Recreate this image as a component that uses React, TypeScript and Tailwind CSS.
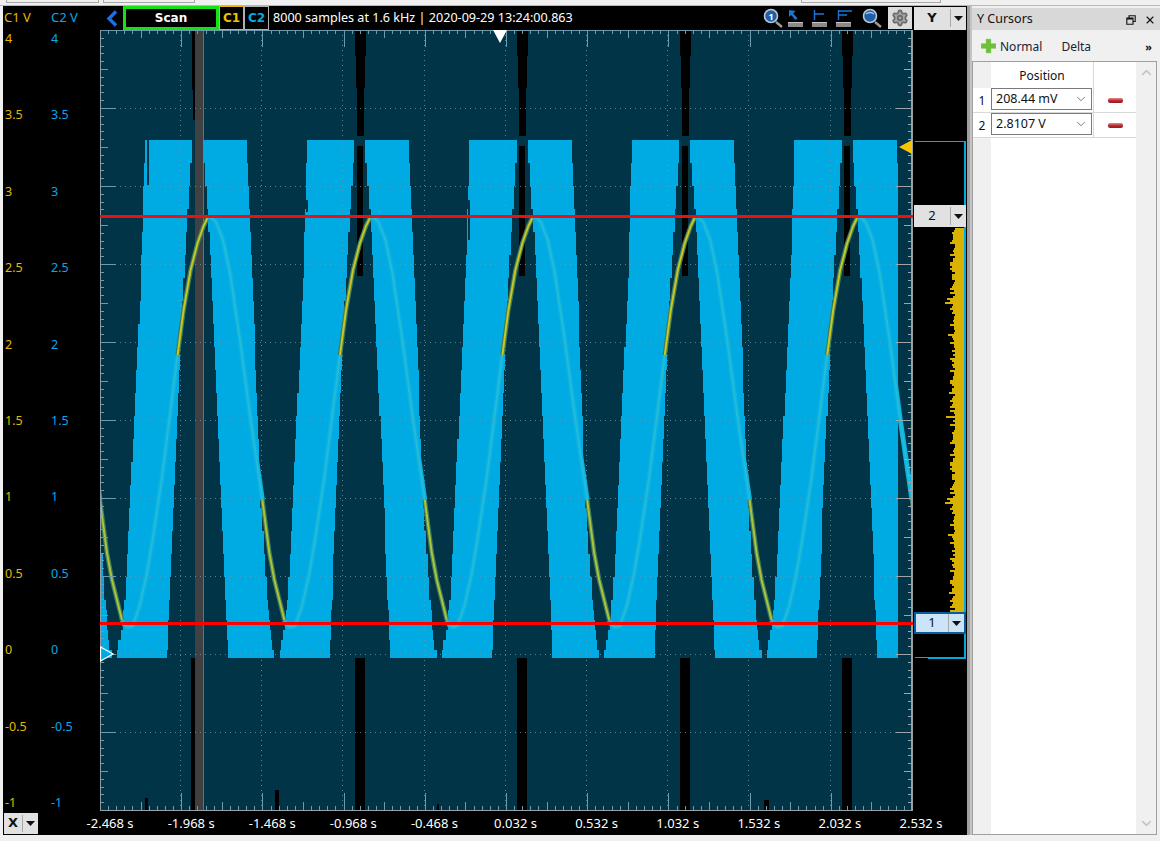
import { ChevronDown, ChevronUp, Settings, X } from 'lucide-react';

const PERIOD = 162.4;
const BLUE = '#00abe3';
const DARK = '#023448';
const GRID = '#6d9aac';

type Pt = [number, number];

const gap1Left: Pt[] = [[140, 192], [216, 187], [280, 183], [480, 174], [658, 167]];
const gap1Right: Pt[] = [[140, 203], [216, 209], [280, 212], [480, 221], [658, 228]];
const gap2Left: Pt[] = [[140, 247], [280, 253], [480, 260], [550, 265], [623, 270], [643, 272], [658, 277]];
const gap2Right: Pt[] = [[140, 307], [280, 303], [480, 293], [550, 290], [623, 285], [643, 280], [658, 279]];

function edgeAt(pts: Pt[], y: number) {
  for (let i = 0; i < pts.length - 1; i++) {
    const [y0, x0] = pts[i];
    const [y1, x1] = pts[i + 1];
    if (y <= y1) return x0 + ((x1 - x0) * (y - y0)) / (y1 - y0);
  }
  return pts[pts.length - 1][1];
}

// stepped outline, the scope draws the envelope in decimated columns
function stepped(left: Pt[], right: Pt[], off: number) {
  const ys: number[] = [];
  for (let y = 140; y < 600; y += 23) ys.push(y);
  for (let y = 600; y < 658; y += 10) ys.push(y);
  ys.push(658);
  const l: string[] = [];
  const r: string[] = [];
  for (let i = 0; i < ys.length - 1; i++) {
    const lx = Math.round(edgeAt(left, ys[i]) + off);
    const rx = Math.round(edgeAt(right, ys[i]) + off);
    l.push(`${lx},${ys[i]} ${lx},${ys[i + 1]}`);
    r.unshift(`${rx},${ys[i + 1]} ${rx},${ys[i]}`);
  }
  return [...l, ...r].join(' ');
}

const fallBlue: Pt[] = [[0, 217], [4, 218], [8, 222], [15, 240], [22, 273], [32, 340], [42, 415], [54.4, 500]];
const fallDark: Pt[] = [[54.4, 500], [57.4, 523], [61.4, 553], [66.4, 580], [71.4, 600], [76.4, 620]];
const riseBlue: Pt[] = [[76.4, 620], [79, 625], [82, 627], [87, 626], [94, 606], [101, 575], [107, 540], [116, 480], [132, 355]];
const riseDark: Pt[] = [[132, 355], [138, 310], [145, 270], [152, 243], [158, 226], [162.4, 217]];

const toLine = (pts: Pt[], off: number) => pts.map(([x, y]) => `${x + off},${y}`).join(' ');

function range(n: number) {
  return Array.from({ length: n }, (_, i) => i);
}

function Plot() {
  const peaks = [-1, 0, 1, 2, 3, 4].map((k) => k * PERIOD);
  const bars = [1, 2, 3, 4].map((k) => 197.5 + k * PERIOD);
  return (
    <svg width="813" height="781" viewBox="100 30 813 781" shapeRendering="crispEdges" className="block shrink-0">
      <rect x="100" y="30" width="813" height="781" fill={DARK} />
      <rect x="100" y="140" width="798" height="518" fill={BLUE} />
      {peaks.map((off) => (
        <g key={off}>
          <polygon points={stepped(gap1Left, gap1Right, off)} fill={DARK} />
          <polygon points={stepped(gap2Left, gap2Right, off)} fill={DARK} />
        </g>
      ))}
      <rect x="147" y="140" width="2" height="45" fill={DARK} />
      <rect x="306" y="200" width="2" height="12" fill={DARK} />
      <rect x="226" y="640" width="2" height="18" fill={DARK} />
      <rect x="468" y="200" width="2" height="40" fill={DARK} />

      {/* black dropouts */}
      <rect x="192" y="30" width="11" height="60" fill="#000" />
      <rect x="193" y="90" width="10" height="30" fill="#000" />
      <rect x="191" y="658" width="12" height="153" fill="#000" />
      {bars.map((x) => (
        <g key={x}>
          <rect x={x - 5} y="30" width="11" height="26" fill="#000" />
          <rect x={x - 4} y="56" width="9" height="32" fill="#000" />
          <rect x={x - 3} y="88" width="7" height="48" fill="#000" />
          <rect x={x - 3} y="146" width="6" height="130" fill="#000" />
          <rect x={x - 5} y="658" width="10" height="153" fill="#000" />
        </g>
      ))}
      <rect x="145" y="798" width="3" height="13" fill="#000" />
      <rect x="275" y="790" width="4" height="21" fill="#000" />
      <rect x="764" y="800" width="5" height="11" fill="#000" />
      <rect x="437" y="804" width="2" height="7" fill="#000" />
      <rect x="195" y="30" width="8" height="781" fill="#424242" fillOpacity="0.95" />
      <rect x="203" y="30" width="1" height="781" fill="#6d8794" fillOpacity="0.8" />

      {/* grid */}
      <g stroke={GRID} strokeWidth="1" strokeOpacity="0.8" shapeRendering="crispEdges">
        {range(9).map((i) => (
          <line key={i} x1={180.5 + i * 81.2} x2={180.5 + i * 81.2} y1="30" y2="811" strokeDasharray="1 4" />
        ))}
        {range(9).map((i) => (
          <line key={i} x1="100" x2="912" y1={108.5 + i * 78} y2={108.5 + i * 78} strokeDasharray="1 4" />
        ))}
      </g>

      {/* traces */}
      <g fill="none" shapeRendering="auto" strokeLinejoin="round">
        {peaks.map((off) => (
          <g key={off}>
            <polyline points={toLine(fallBlue, 208 + off)} stroke="#0db1e2" strokeWidth="5" />
            <polyline points={toLine(riseBlue, 208 + off)} stroke="#0db1e2" strokeWidth="5" />
            <polyline points={toLine(fallBlue, 208 + off)} stroke="#22bcd8" strokeWidth="2" />
            <polyline points={toLine(riseBlue, 208 + off)} stroke="#22bcd8" strokeWidth="2" />
            <polyline points={toLine(fallDark, 208 + off)} stroke="#3f7d5e" strokeWidth="4.5" />
            <polyline points={toLine(riseDark, 208 + off)} stroke="#3f7d5e" strokeWidth="4.5" />
            <polyline points={toLine(fallDark, 208 + off)} stroke="#adc437" strokeWidth="2" />
            <polyline points={toLine(riseDark, 208 + off)} stroke="#c9c71f" strokeWidth="2" />
          </g>
        ))}
      </g>

      {/* tick marks */}
      <g stroke={GRID} strokeWidth="1">
        {range(101).map((i) => {
          const x = Math.round(100 + i * 8.12) + 0.5;
          const len = i % 10 === 0 ? 17 : i % 5 === 0 ? 8 : 4;
          return (
            <g key={i}>
              <line x1={x} x2={x} y1="30" y2={30 + len} />
              <line x1={x} x2={x} y1={810 - len} y2="810" />
            </g>
          );
        })}
        {range(101).map((i) => {
          const y = Math.round(30 + i * 7.8) + 0.5;
          const len = i % 10 === 0 ? 16 : i % 5 === 0 ? 8 : 4;
          return (
            <g key={i}>
              <line x1="100" x2={100 + len} y1={y} y2={y} />
              <line x1={912 - len} x2="912" y1={y} y2={y} stroke="#9aa6ac" />
            </g>
          );
        })}
      </g>
      <rect x="100" y="30" width="813" height="1" fill={GRID} />
      <rect x="100" y="30" width="1" height="781" fill="#8c9ca4" />
      <rect x="100" y="810" width="813" height="1" fill="#9aa0a4" />
      <rect x="911" y="30" width="2" height="781" fill="#9aa0a4" />

      {/* cursors */}
      <rect x="100" y="215" width="813" height="3" fill="#ee1010" />
      <rect x="100" y="622" width="813" height="3" fill="#ff0000" />

      {/* markers */}
      <g shapeRendering="auto">
        <polygon points="493,30 507,30 500,43" fill="#fff" />
        <polygon points="912,140 912,154 899,147" fill="#f7c600" />
        <polygon points="100.5,647 113,654 100.5,661" fill={BLUE} stroke="#fff" strokeWidth="1.2" />
      </g>
    </svg>
  );
}

function histogramPoints() {
  // jagged left edge of the histogram strip
  const pts: string[] = ['964,228'];
  let seed = 7;
  for (let y = 228; y < 611; y += 2) {
    seed = (seed * 73 + 41) % 101;
    const x = seed % 17 === 0 ? 945 + (seed % 5) : seed % 5 === 0 ? 950 : 952 + (seed % 4);
    pts.push(`${x},${y}`, `${x},${y + 2}`);
  }
  pts.push('964,612');
  return pts.join(' ');
}

function DropButton({ label, active }: { label: string; active?: boolean }) {
  return (
    <div
      className={`flex items-center w-[52px] h-[22px] ${
        active ? 'bg-[#cce4f7] border-2 border-[#0a5d9c]' : 'bg-[#e1e1e1]'
      }`}
    >
      <span className="flex-1 text-center text-[13px] text-[#111]">{label}</span>
      <span className="w-px h-[18px] bg-[#a8a8a8]" />
      <span className="w-[15px] flex justify-center">
        <svg width="9" height="5" viewBox="0 0 9 5">
          <polygon points="0,0 9,0 4.5,5" fill="#111" />
        </svg>
      </span>
    </div>
  );
}

function RightScale() {
  return (
    <div className="relative w-[54px] shrink-0">
      <svg width="54" height="781" viewBox="913 30 54 781" shapeRendering="crispEdges" className="block">
        <rect x="915" y="141" width="50" height="1" fill={BLUE} />
        <polygon points={histogramPoints()} fill="#d9b200" />
        <rect x="964" y="141" width="2" height="518" fill={BLUE} />
        <rect x="928" y="657" width="38" height="2" fill={BLUE} />
        <rect x="915" y="657" width="13" height="1" fill={BLUE} />
      </svg>
      <div className="absolute left-[1px] top-[175px]">
        <DropButton label="2" />
      </div>
      <div className="absolute left-[1px] top-[582px]">
        <DropButton label="1" active />
      </div>
    </div>
  );
}

function Magnifier({ digit }: { digit?: boolean }) {
  return (
    <svg width="24" height="24" viewBox="0 0 24 24">
      <line x1="16" y1="16" x2="22" y2="21" stroke="#9a9a9a" strokeWidth="2.4" />
      <circle cx="11" cy="10" r="6.5" fill="#1f5fa8" stroke="#b8c8d8" strokeWidth="1.6" />
      {digit ? (
        <text x="11" y="13.5" textAnchor="middle" fontSize="9" fontWeight="700" fill="#fff">
          1
        </text>
      ) : (
        <path d="M7 8 Q11 5 15 8" stroke="#a8c8e8" strokeWidth="1.4" fill="none" />
      )}
    </svg>
  );
}

function CursorTool({ kind }: { kind: 'arrow' | 'single' | 'double' }) {
  return (
    <svg width="24" height="24" viewBox="0 0 24 24">
      {kind === 'arrow' && <path d="M5 4 L5 11 L7.2 9 L11.5 14 L13.5 12.2 L9.2 7.4 L11.6 5 Z" fill="#1478d8" />}
      {kind === 'single' && <path d="M6.5 4 V14 M6.5 8 H16" stroke="#1478d8" strokeWidth="1.4" fill="none" />}
      {kind === 'double' && <path d="M6.5 4 V14 M6.5 5 H20 M6.5 9 H15" stroke="#1478d8" strokeWidth="1.4" fill="none" />}
      <rect x="4" y="16" width="15" height="5" fill="#8a8a8a" />
      <rect x="4" y="16" width="15" height="1" fill="#c4c4c4" />
    </svg>
  );
}

function ScopeHeader() {
  return (
    <div className="flex items-center h-6 shrink-0">
      <div className="w-[97px] flex text-[13px]">
        <span className="w-[48px] pl-px text-[#e6b800]">C1 V</span>
        <span className="text-[#08a8ea]">C2 V</span>
      </div>
      <div className="w-[23px] flex justify-center">
        <svg width="12" height="17" viewBox="0 0 12 17">
          <polyline points="10,1.5 3,8.5 10,15.5" fill="none" stroke="#1c6fe8" strokeWidth="3.4" />
        </svg>
      </div>
      <div className="w-[96px] h-6 border-[3px] border-[#16e016] flex items-center justify-center [font-family:'DejaVu_Sans',sans-serif] text-[12px] font-bold text-white">
        Scan
      </div>
      <div className="w-[25px] h-6 border border-[#e8b800] flex items-center justify-center [font-family:'DejaVu_Sans',sans-serif] text-[12px] font-bold text-[#f2c200]">
        C1
      </div>
      <div className="w-[25px] h-6 border border-[#b0b0b0] flex items-center justify-center [font-family:'DejaVu_Sans',sans-serif] text-[12px] font-bold text-[#08a8ea]">
        C2
      </div>
      <span className="ml-[4px] text-[12.6px] text-white whitespace-nowrap">
        8000 samples at 1.6 kHz | 2020-09-29 13:24:00.863
      </span>
      <div className="ml-auto mr-px flex items-center">
        <Magnifier digit />
        <CursorTool kind="arrow" />
        <CursorTool kind="single" />
        <CursorTool kind="double" />
        <div className="w-[3px]" />
        <Magnifier />
        <div className="w-[5px]" />
        <div className="w-[24px] h-[22px] bg-[#dcdcdc] flex items-center justify-center">
          <Settings size={18} className="text-[#6c6c6c] fill-[#a8a8a8]" strokeWidth={2.4} />
        </div>
        <div className="w-[2px]" />
        <div className="flex items-center w-[52px] h-[23px] bg-[#e1e1e1]">
          <span className="flex-1 text-center [font-family:'DejaVu_Sans',sans-serif] text-[13px] font-bold text-[#111]">Y</span>
          <span className="w-px h-[18px] bg-[#a8a8a8]" />
          <span className="w-[15px] flex justify-center">
            <svg width="9" height="5" viewBox="0 0 9 5">
              <polygon points="0,0 9,0 4.5,5" fill="#111" />
            </svg>
          </span>
        </div>
      </div>
    </div>
  );
}

const yLabels = ['4', '3.5', '3', '2.5', '2', '1.5', '1', '0.5', '0', '-0.5', '-1'];
const xLabels = ['-2.468 s', '-1.968 s', '-1.468 s', '-0.968 s', '-0.468 s', '0.032 s', '0.532 s', '1.032 s', '1.532 s', '2.032 s', '2.532 s'];

function YAxis() {
  return (
    <div className="w-[97px] shrink-0 flex flex-col justify-between h-[781px] pt-px text-[12.5px] leading-4">
      {yLabels.map((l) => (
        <div key={l} className="flex">
          <span className="w-[48px] pl-[2px] text-[#e6b800]">{l}</span>
          <span className="text-[#08a8ea]">{l}</span>
        </div>
      ))}
    </div>
  );
}

function BottomBar() {
  return (
    <div className="flex items-center h-6 shrink-0">
      <div className="ml-px flex items-center w-[34px] h-[21px] bg-[#e1e1e1]">
        <span className="flex-1 text-center [font-family:'DejaVu_Sans',sans-serif] text-[13px] font-bold text-[#111]">X</span>
        <span className="w-px h-[17px] bg-[#a8a8a8]" />
        <span className="w-[15px] flex justify-center">
          <svg width="9" height="5" viewBox="0 0 9 5">
            <polygon points="0,0 9,0 4.5,5" fill="#111" />
          </svg>
        </span>
      </div>
      <div className="ml-[31.5px] pt-px flex text-[13px] text-white">
        {xLabels.map((l) => (
          <span key={l} className="w-[81.1px] text-center whitespace-nowrap">
            {l}
          </span>
        ))}
      </div>
    </div>
  );
}

function Minus() {
  return <div className="w-[15px] h-[5px] rounded-[2px] bg-linear-to-b from-[#e58a8a] via-[#c02a30] to-[#8e1c22]" />;
}

function CursorRow({ index, value }: { index: string; value: string }) {
  return (
    <div className="flex h-[25px] border-b border-[#d8d8d8]">
      <div className="w-[18px] bg-white flex items-end justify-center pb-[2px] text-[12px] text-[#111]">{index}</div>
      <div className="w-[103px] flex items-start border-r border-[#d8d8d8]">
        <div className="w-[101px] h-[22px] border border-[#7a7a7a] bg-white flex items-center pl-[4px] text-[12.5px] text-[#111]">
          <span className="flex-1">{value}</span>
          <ChevronDown size={14} className="mr-[3px] text-[#555]" strokeWidth={1.3} />
        </div>
      </div>
      <div className="w-[42px] flex items-center justify-center">
        <Minus />
      </div>
    </div>
  );
}

function CursorPanel() {
  return (
    <div className="w-[188px] shrink-0 flex flex-col pt-[2px] text-[12px] text-[#111]">
      <div className="flex items-center h-[22px] bg-[#d8d8d8] pl-[5px] pr-[4px] pt-px">
        <span className="flex-1 text-[12.5px]">Y Cursors</span>
        <svg width="10" height="10" viewBox="0 0 10 10" className="mr-[8px]">
          <path d="M3 2.5 V0.8 H9.2 V6.5 H7 M0.8 3 H7 V9.2 H0.8 Z M0.8 4 H7" fill="none" stroke="#111" strokeWidth="1.1" />
        </svg>
        <X size={12} strokeWidth={2.2} className="text-[#111]" />
      </div>
      <div className="flex items-center h-[31px] pl-[9px] pr-[8px] pt-[2px]">
        <svg width="15" height="16" viewBox="0 0 15 16" className="-mt-[2px]">
          <path d="M5 1 H10 V5.5 H15 V10.5 H10 V15 H5 V10.5 H0 V5.5 H5 Z" fill="#6fbf3a" stroke="#9ed977" strokeWidth="0.5" />
        </svg>
        <span className="ml-[4px] text-[#1a2233]">Normal</span>
        <span className="ml-[19px] text-[#1a2233]">Delta</span>
        <span className="ml-auto text-[11px] font-bold leading-none">»</span>
      </div>
      <div className="flex-1 flex border-t border-l border-b border-[#a0a0a0] mr-[3px] border-r">
        <div className="w-[163px] shrink-0 flex flex-col bg-white">
          <div className="flex h-[26px]">
            <div className="w-[18px] bg-[#f0f0f0]" />
            <div className="w-[103px] flex items-center justify-center pt-px border-r border-[#d8d8d8]">Position</div>
            <div className="w-[42px]" />
          </div>
          <CursorRow index="1" value="208.44 mV" />
          <CursorRow index="2" value="2.8107 V" />
          <div className="flex flex-1">
            <div className="w-[18px] bg-[#f0f0f0]" />
          </div>
        </div>
        <div className="flex-1 bg-[#f0f0f0] flex flex-col items-center justify-between py-[3px] text-[#c4c4c4]">
          <ChevronUp size={15} strokeWidth={2.4} />
          <ChevronDown size={15} strokeWidth={2.4} />
        </div>
      </div>
      <div className="h-[6px]" />
    </div>
  );
}

export default function App() {
  return (
    <div className="w-[1160px] h-[841px] overflow-hidden flex flex-col bg-[#f0f0f0] [font-family:'Noto_Sans',sans-serif]">
      <div className="h-[6px] shrink-0 relative border-b border-[#b8b8b8]">
        <div className="flex">
          <div className="ml-[6px] w-[93px] h-[3px] border-b border-x border-[#a8a8a8]" />
          <div className="ml-[4px] w-[92px] h-[3px] border-b border-x border-[#a8a8a8]" />
          <div className="ml-[606px] w-[140px] h-[3px] border-b border-x border-[#a8a8a8]" />
        </div>
      </div>
      <div className="flex flex-1 min-h-0">
        <div className="w-[3px] shrink-0" />
        <div className="w-[964px] h-[829px] shrink-0 bg-black flex flex-col">
          <ScopeHeader />
          <div className="flex h-[781px] shrink-0">
            <YAxis />
            <Plot />
            <RightScale />
          </div>
          <BottomBar />
        </div>
        <div className="w-[3px] shrink-0 bg-[#a0a0a0] h-[829px]" />
        <div className="w-[2px] shrink-0 bg-[#c4c4c4] h-[829px]" />
        <CursorPanel />
      </div>
    </div>
  );
}
